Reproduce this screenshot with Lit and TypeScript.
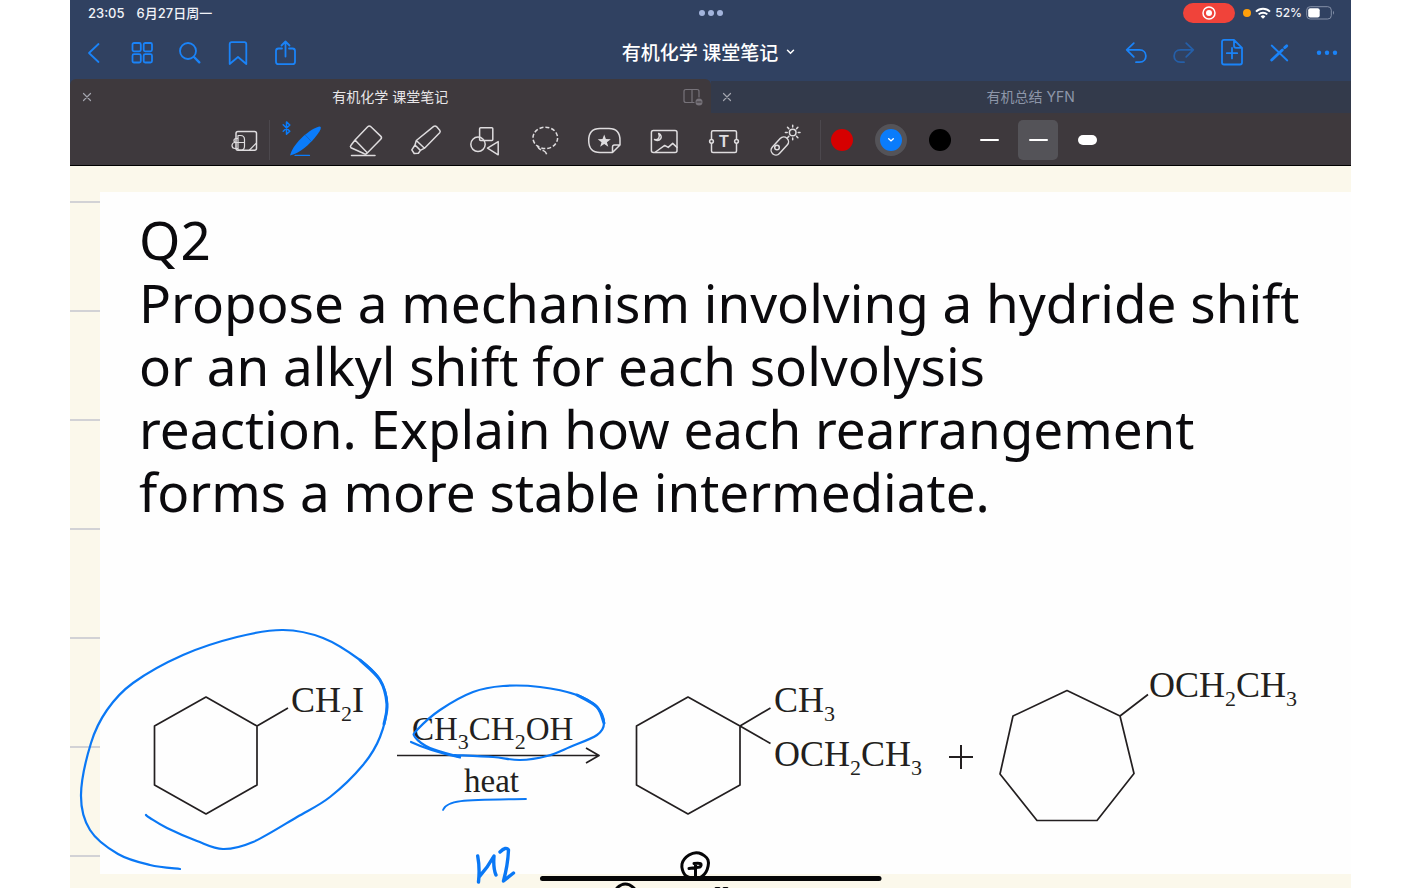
import { LitElement, html, svg, css } from "lit";
import { customElement, property, state } from "lit/decorators.js";
import { classMap } from "lit/directives/class-map.js";

type Point = [number, number];

/** Turns pen samples into a smooth cubic path. */
function smooth(points: Point[]): string {
  let d = `M${points[0][0]} ${points[0][1]}`;
  for (let i = 0; i < points.length - 1; i++) {
    const p0 = points[Math.max(i - 1, 0)];
    const p1 = points[i];
    const p2 = points[i + 1];
    const p3 = points[Math.min(i + 2, points.length - 1)];
    d += `C${p1[0] + (p2[0] - p0[0]) / 6} ${p1[1] + (p2[1] - p0[1]) / 6} ${p2[0] - (p3[0] - p1[0]) / 6} ${p2[1] - (p3[1] - p1[1]) / 6} ${p2[0]} ${p2[1]}`;
  }
  return d;
}

const navIcons: Record<string, unknown> = {
  back: svg`<path d="M20.5 7 11 16l9.500 9"/>`,
  grid: svg`<rect x="6.500" y="6" width="8.300" height="8.300" rx="1.500"/><rect x="17.700" y="6" width="8.300" height="8.300" rx="1.500"/><rect x="6.500" y="17.200" width="8.300" height="8.300" rx="1.500"/><rect x="17.700" y="17.200" width="8.300" height="8.300" rx="1.500"/>`,
  search: svg`<circle cx="14" cy="14" r="8"/><path d="m20 20 5.300 5.300" stroke-width="2.400"/>`,
  bookmark: svg`<path d="M7.700 27V7.200q0-2 2-2h12.600q2 0 2 2V27L16 20z"/>`,
  share: svg`<path d="M12 11.500H8.500q-2.500 0-2.500 2.500v10.700Q6 27.200 8.500 27.200h14q2.500 0 2.500-2.500V14q0-2.500-2.500-2.500H19M15.500 19.500V4.700M11.500 8.500l4-4 4 4"/>`,
  undo: svg`<path d="M14.800 6.200 7.700 12.800l7.100 7M7.700 12.800H20.500c8.500 0 8.500 12.400 0 12.400h-3.500"/>`,
  redo: svg`<path d="m19.200 6.200 7.100 6.600-7.100 7M26.300 12.800H13.500c-8.500 0-8.500 12.400 0 12.400H17"/>`,
  addPage: svg`<path d="M19 2.800H9q-2 0-2 2v20.700q0 2 2 2h16q2 0 2-2V10.800zV8.800q0 2 2 2h6M17 11v10.400M11.800 16.200h10.400"/>`,
  pencilOff: svg`<path d="m8.700 8.500 15.600 15"/><path d="m8.700 23 10.600-10" stroke-width="2.800"/><path d="m21.700 10.600 2-1.700" stroke-width="3"/>`,
  more: svg`<g fill="currentColor" stroke="none"><circle cx="8" cy="15.800" r="2.200"/><circle cx="16" cy="15.800" r="2.200"/><circle cx="24" cy="15.800" r="2.200"/></g>`,
};

const toolIcons: Record<string, unknown> = {
  zoomWindow: svg`<rect x="11" y="11.500" width="20.500" height="18.700" rx="2"/><path d="M13 15.500h2.500q4 0 4 4v6.700q0 4-4 4H13zM13 22.500h6.500M24.500 30l6.500-6.500M12.500 18.500H11a2 2 0 0 0 0 4h1.500M12.500 22.500H10a2.500 2.500 0 0 0 0 6h2.500" stroke-width="1.200"/>`,
  pen: svg`<g class="ink"><path d="M6 35.400C7.500 30 10.500 25.500 15 20.500 21.500 13.500 29.500 8 34.500 6.700q3.200-.7 2 2.500C34.500 14 28 21.500 21 27.500 16 31.500 11.500 34.500 6 35.400z" fill="currentColor" stroke="none"/><path d="M11 35.400h14.500" stroke-width="1.200"/><path d="m21.500 15.200 5 5.400" stroke="#1b5fae" stroke-width=".8"/><path d="M-.8 4.800 5.800 11.200 2.500 14.200V1.900L5.800 5-.8 11.200" stroke-width="1.500"/></g>`,
  eraser: svg`<path d="M11 20 23.700 6.700q1.600-1.500 3.200 0l9.800 9.400q1.600 1.600 0 3.200L23 33.200q-1.600 1.600-3.200.3L7 27.700q-1.200-1.200 0-2.500zl12 12.600M7.500 35.400h23.500"/>`,
  marker: svg`<path d="M12.300 20.500 29.700 6.400q1.500-1 2.800.2l3.200 3.600q1 1.400 0 2.600L20.500 28.200zM12.300 20.500 11 25l5.400 5.400 4.100-2.200M11 25l-3.200 4.800 2.400 3.700 4.200-.2 2-2.900"/>`,
  shapes: svg`<rect x="15.600" y="7.800" width="13.200" height="12.800" rx="1"/><circle cx="14" cy="24.300" r="7.200"/><path d="m23.500 28.200 10.700-6.600v13.200z"/>`,
  lasso: svg`<ellipse cx="21.300" cy="17.900" rx="12.300" ry="10.700" stroke-dasharray="4 2" stroke-linecap="butt"/><path d="M13.500 25.300C14.500 30 17.500 29.700 19.500 30.600 21.500 31.500 22.500 33 22.800 35" stroke-dasharray="6 1.500" stroke-linecap="butt"/>`,
  sticker: svg`<path d="M28.500 32.500H16Q4.700 32.500 4.700 20.500T16 8.500h9q11 0 11 12v4.500zV27q0-2 2-2H36"/><path d="m20.200 14.500 1.700 4.500 4.900.2-3.900 3 1.400 4.600-4.100-2.700-4 2.700 1.300-4.600-3.800-3 4.800-.2z" fill="currentColor" stroke="none"/>`,
  image: svg`<rect x="7.400" y="10.500" width="25.600" height="22" rx="2"/><path d="M14.700 13.500c5.500 3 1 9-4.200 6 4 .8 5.800-2.500 4.200-6zM11.500 32l9.200-6.600 3.500 2 4.500-4 4.300 4"/>`,
  text: svg`<rect x="7.500" y="10.800" width="25" height="21.700" rx="1.500"/><circle class="hole" cx="7.500" cy="21.300" r="1.900"/><circle class="hole" cx="32.500" cy="21.300" r="1.900"/><text x="19.800" y="27.300" text-anchor="middle">T</text>`,
  laser: svg`<rect x="5.300" y="21.200" width="21" height="9.600" rx="4.800" transform="rotate(-47 15.800 26)"/><circle cx="13" cy="27.500" r="2.300"/><circle cx="28.700" cy="12.500" r="3.300"/><path d="M28.700 5.200v1.700M28.700 18v1.800M21.400 12.500h1.800M34.200 12.500H36M23.500 7.300l1.300 1.300M32.600 16.400l1.300 1.300M23.500 17.700l1.300-1.300M32.600 8.600l1.300-1.300"/>`,
};

@customElement("nav-button")
class NavButton extends LitElement {
  @property() icon = "";
  @property() label = "";
  @property({ type: Boolean }) disabled = false;

  static styles = css`
    :host { display: block; }
    button { display: grid; place-items: center; width: 48px; height: 53px; padding: 0; border: 0; background: none; color: #1a83f8; cursor: pointer; }
    button:disabled { color: #255fa8; }
    svg { width: 32px; height: 32px; fill: none; stroke: currentColor; stroke-width: 1.8; stroke-linecap: round; stroke-linejoin: round; }
  `;

  render() {
    return html`<button aria-label=${this.label} ?disabled=${this.disabled}>
      <svg viewBox="0 0 32 32" aria-hidden="true">${navIcons[this.icon]}</svg>
    </button>`;
  }
}

@customElement("tool-button")
class ToolButton extends LitElement {
  @property() icon = "";
  @property() label = "";

  static styles = css`
    :host { display: block; }
    button { display: grid; place-items: center; width: 100%; height: 40px; padding: 0; border: 0; background: none; color: #dedcde; cursor: pointer; }
    svg { width: 40px; height: 40px; overflow: visible; fill: none; stroke: currentColor; stroke-width: 1.5; stroke-linecap: round; stroke-linejoin: round; }
    .ink { color: #0a7cfb; }
    .hole { fill: #3e393d; }
    text { font: 700 16px "Liberation Sans", sans-serif; fill: currentColor; stroke: none; }
  `;

  render() {
    return html`<button aria-label=${this.label}>
      <svg viewBox="0 0 40 40" aria-hidden="true">${toolIcons[this.icon]}</svg>
    </button>`;
  }
}

@customElement("note-canvas")
class NoteCanvas extends LitElement {
  static styles = css`
    :host { display: block; position: relative; overflow: hidden; padding: 26px 0 14px 30px;
      background: repeating-linear-gradient(#fbf8eb 0 35px, #d2d2d5 35px 37px, #fbf8eb 37px 109px); }
    .sheet { box-sizing: border-box; height: 100%; padding: 16px 0 0 39px; background: #fefefe; }
    h1, p { margin: 0; font: 400 53px/63px "Noto Sans", "Open Sans", sans-serif; color: #0b0a0d; }
    .line { display: block; white-space: nowrap; }
    .drawing { position: absolute; top: 0; left: 0; width: 1280px; height: 722px; }
    .bond { fill: none; stroke: #231f20; stroke-width: 1.7; stroke-linejoin: round; }
    .formula { font: 36px "Liberation Serif", serif; fill: #231f20; }
    .reagent { font-size: 33px; }
    .sub { font-size: 22px; }
    .blue { fill: none; stroke: #0a78f5; stroke-width: 2.2; stroke-linecap: round; stroke-linejoin: round; }
    .black { fill: none; stroke: #060607; stroke-width: 3; stroke-linecap: round; stroke-linejoin: round; }
    .firm { stroke-width: 3; }
    .heavy { stroke-width: 3.4; }
    .thin { stroke-width: 1.8; }
    .bar { stroke-width: 5; }
  `;

  private loop: Point[] = [[146, 815], [150, 818], [167, 828], [197, 841], [223, 849], [253, 842], [297, 817], [330, 797], [363, 765], [380, 737], [387, 704], [380, 680], [360, 660], [323, 638], [283, 630], [237, 637], [183, 655], [133, 683], [107, 710], [91, 743], [81, 795], [90, 830], [118, 854], [150, 865], [180, 869]];
  private loopFirm: Point[] = [[360, 660], [380, 680], [387, 704], [384, 724]];
  private ring: Point[] = [[455, 755], [493, 757], [520, 760], [547, 756], [570, 747], [597, 735], [604, 723], [597, 707], [577, 695], [540, 687], [503, 686], [473, 692], [440, 710], [417, 730], [415, 737], [430, 748], [460, 757]];
  private ringFirm: Point[] = [[577, 695], [597, 707], [604, 723]];
  private halo: Point[] = [[695, 879], [685, 875], [682, 864], [689, 855], [699, 853], [708, 860], [706, 872], [697, 879], [688, 878]];

  render() {
    const sub = (n: number) => svg`<tspan class="sub" dy="9">${n}</tspan>`;
    return html`
      <article class="sheet">
        <h1>Q2</h1>
        <p>
          <span class="line">Propose a mechanism involving a hydride shift</span>
          <span class="line">or an alkyl shift for each solvolysis</span>
          <span class="line">reaction. Explain how each rearrangement</span>
          <span class="line">forms a more stable intermediate.</span>
        </p>
      </article>
      <svg class="drawing" viewBox="70 166 1280 722" role="img" aria-label="Solvolysis of cyclohexylmethyl iodide in ethanol">
        <g class="bond">
          <path d="M206 697 257 726V785L206 814 154.500 785V726ZM257 726 288 708"/>
          <path d="M688 697 740 726V785L688 814 636.500 785V726ZM770.500 708 740 726 770.500 743.500"/>
          <path d="M1067 690.500 1120 716 1134 773.500 1097 820.500H1037L1000 774 1013 716ZM1120 716 1148 694.500"/>
          <path d="M397 755.500H598M586 748 599 755.500 586 763"/>
          <path d="M949 757H973M961 745V769" stroke-width="2"/>
        </g>
        <g class="formula">
          <text x="291" y="712">CH${sub(2)}<tspan dy="-9">I</tspan></text>
          <text x="774" y="712">CH${sub(3)}</text>
          <text x="774" y="766">OCH${sub(2)}<tspan dy="-9">CH</tspan>${sub(3)}</text>
          <text x="1149" y="697">OCH${sub(2)}<tspan dy="-9">CH</tspan>${sub(3)}</text>
          <text class="reagent" x="412" y="740">CH${sub(3)}<tspan dy="-9">CH</tspan>${sub(2)}<tspan dy="-9">OH</tspan></text>
          <text class="reagent" x="464" y="792">heat</text>
        </g>
        <g class="blue">
          <path d=${smooth(this.loop)}/>
          <path class="firm" d=${smooth(this.loopFirm)}/>
          <path d=${smooth(this.ring)}/>
          <path class="firm" d=${smooth(this.ringFirm)}/>
          <path d="M411 742Q430 751 460 757.500"/>
          <path class="thin" d="M443 810C447 799 470 800 526 799"/>
          <path class="heavy" d="M477.700 856Q480 868 478.500 882M479 877Q488 867 494 856 493 868 496 875M500 852Q506 846 508.500 850 508 864 503.500 881L513.500 873"/>
        </g>
        <g class="black">
          <path d=${smooth(this.halo)}/>
          <path d="M689 868.500 700 867Q704 862 694 863.500M695.500 864V876"/>
          <path class="bar" d="M542.500 878.500H879"/>
          <path d="M617 888Q625 880 634 888M716 888.500H719M724 888.500H727"/>
        </g>
      </svg>
    `;
  }
}

@customElement("app-root")
class AppRoot extends LitElement {
  @state() private color = "blue";
  @state() private width = "medium";

  static styles = css`
    :host { display: block; background: #fff; font-family: Inter, "Noto Sans CJK SC", sans-serif; }
    .screen { display: flex; flex-direction: column; height: 100vh; margin: 0 70px; overflow: hidden; background: #304161; }
    button { padding: 0; border: 0; background: none; font: inherit; color: inherit; cursor: pointer; }
    .status { display: grid; grid-template-columns: 1fr auto 1fr; align-items: center; height: 26px; flex: none; color: #f1f3f8; font-size: 13px; font-weight: 500; line-height: 26px; }
    .clock { display: flex; gap: 12px; padding-left: 18px; }
    .dots { display: flex; gap: 3px; }
    .dots i { width: 6px; height: 6px; border-radius: 50%; background: #a3b4dc; }
    .system { display: flex; align-items: center; justify-content: flex-end; gap: 4px; padding-right: 16px; }
    .record { display: grid; place-items: center; width: 52px; height: 20px; margin-right: 4px; border-radius: 10px; background: #f0433a; }
    .mic { width: 8px; height: 8px; border-radius: 50%; background: #ff9f0a; }
    .percent { font-size: 12px; }
    .system svg { display: block; }
    .nav { display: grid; grid-template-columns: 1fr auto 1fr; align-items: center; height: 53px; flex: none; }
    .group { display: flex; }
    .end { justify-content: flex-end; }
    .title { display: flex; align-items: center; gap: 8px; padding: 0 4px 2px 0; color: #fff; font: 500 19px/26px "Noto Sans CJK SC", sans-serif; }
    .tabs { display: grid; grid-template-columns: 1fr 1fr; align-items: end; height: 34px; flex: none; }
    .tab { display: grid; grid-template-columns: 33px 1fr 33px; align-items: center; justify-items: center; box-sizing: border-box; height: 32px; background: #333a4b; color: #8d96a9; font-size: 14px; line-height: 20px; }
    .tab.current { height: 34px; padding-top: 2px; border-radius: 6px 6px 0 0; background: #3e393d; color: #e8e6e8; }
    .tab svg { display: block; fill: none; stroke: #a3a5ae; stroke-width: 1.2; stroke-linecap: round; }
    .tools { display: flex; flex: none; height: 40px; padding: 7px 0 5px 151px; border-bottom: 1px solid #000; background: #3e393d; }
    .window { width: 48px; border-right: 1px solid #4c484d; margin-right: 4px; }
    .tool { width: 60px; }
    .strokes { display: flex; gap: 9px; margin-left: 6px; padding-left: 1px; border-left: 1px solid #4c484d; }
    .choice { display: grid; place-items: center; width: 40px; height: 40px; border-radius: 5px; }
    .choice.picked { background: #545358; }
    .swatch { display: grid; place-items: center; width: 22px; height: 22px; border: 5px solid transparent; border-radius: 50%; background-clip: padding-box; }
    .picked .swatch { border-color: #545358; background-clip: border-box; }
    .choice.round { background: none; }
    .red { background-color: #d60000; }
    .blue { background-color: #0a7cfb; }
    .black { background-color: #000; }
    .dash { width: 19px; border-radius: 5px; background: #fff; }
    .fine { height: 2px; }
    .medium { height: 2px; }
    .thick { height: 10px; }
    note-canvas { flex: 1; min-height: 0; }
  `;

  private close = html`<svg width="12" height="12" viewBox="0 0 12 12" aria-hidden="true"><path d="m2.500 2.500 7 7m0-7-7 7"/></svg>`;

  render() {
    const colors = ["red", "blue", "black"];
    const widths = ["fine", "medium", "thick"];
    const tools = ["pen", "eraser", "marker", "shapes", "lasso", "sticker", "image", "text", "laser"];
    return html`
      <main class="screen">
        <div class="status">
          <div class="clock"><span>23:05</span><span>6月27日周一</span></div>
          <div class="dots"><i></i><i></i><i></i></div>
          <div class="system">
            <span class="record"><svg width="14" height="14" viewBox="0 0 14 14" fill="none"><circle cx="7" cy="7" r="6" stroke="#fff" stroke-width="1.500"/><circle cx="7" cy="7" r="3" fill="#fff"/></svg></span>
            <span class="mic"></span>
            <svg width="16" height="12" viewBox="0 0 16 12" fill="none" stroke="#fff" stroke-width="2"><path d="M1 4.600a10 10 0 0 1 14 0M3.700 7.400a6.200 6.200 0 0 1 8.600 0"/><path d="M8 11.800 5.600 9.400a3.500 3.500 0 0 1 4.800 0z" fill="#fff" stroke="none"/></svg>
            <span class="percent">52%</span>
            <svg width="29" height="14" viewBox="0 0 29 14"><rect x=".7" y=".7" width="24.600" height="12.300" rx="3.500" fill="none" stroke="#8490a8"/><rect x="2.200" y="2.200" width="11.500" height="9.300" rx="2" fill="#fff"/><path d="M27 4.800q2 2 0 4z" fill="#8490a8"/></svg>
          </div>
        </div>
        <nav class="nav">
          <div class="group">
            <nav-button icon="back" label="返回"></nav-button>
            <nav-button icon="grid" label="缩略图"></nav-button>
            <nav-button icon="search" label="搜索"></nav-button>
            <nav-button icon="bookmark" label="书签"></nav-button>
            <nav-button icon="share" label="分享"></nav-button>
          </div>
          <button class="title">有机化学 课堂笔记
            <svg width="9" height="6" viewBox="0 0 9 6" fill="none" stroke="#fff" stroke-width="1.500" stroke-linecap="round"><path d="m1.500 1.200 3 3 3-3"/></svg>
          </button>
          <div class="group end">
            <nav-button icon="undo" label="撤销"></nav-button>
            <nav-button icon="redo" label="重做" disabled></nav-button>
            <nav-button icon="addPage" label="添加页面"></nav-button>
            <nav-button icon="pencilOff" label="只读模式"></nav-button>
            <nav-button icon="more" label="更多"></nav-button>
          </div>
        </nav>
        <div class="tabs">
          <div class="tab current">
            <button aria-label="关闭">${this.close}</button>
            <span>有机化学 课堂笔记</span>
            <button aria-label="分屏"><svg width="22" height="18" viewBox="0 0 22 18"><g stroke="#77737a"><path d="M16 9V3.500q0-2-2-2H3q-2 0-2 2v9q0 2 2 2h8M9 1.500v13"/><circle cx="16" cy="14" r="3.500" fill="#77737a" stroke="none"/><path d="M14 14h4" stroke="#3e393d"/></g></svg></button>
          </div>
          <div class="tab">
            <button aria-label="关闭">${this.close}</button>
            <span>有机总结 YFN</span>
          </div>
        </div>
        <div class="tools">
          <tool-button class="window" icon="zoomWindow" label="放大窗口"></tool-button>
          ${tools.map((t) => html`<tool-button class="tool" icon=${t} label=${t}></tool-button>`)}
          <div class="strokes">
            ${colors.map((c) => html`<button class=${classMap({ choice: true, round: true, picked: this.color === c })} aria-label=${c} @click=${() => (this.color = c)}>
              <span class=${`swatch ${c}`}>${this.color === c ? html`<svg width="8" height="6" viewBox="0 0 8 6" fill="none" stroke="#fff" stroke-width="1.400" stroke-linecap="round"><path d="m1.700 1.700 2.300 2.200 2.300-2.200"/></svg>` : ""}</span>
            </button>`)}
            ${widths.map((w) => html`<button class=${classMap({ choice: true, picked: this.width === w })} aria-label=${w} @click=${() => (this.width = w)}>
              <span class=${`dash ${w}`}></span>
            </button>`)}
          </div>
        </div>
        <note-canvas></note-canvas>
      </main>
    `;
  }
}
